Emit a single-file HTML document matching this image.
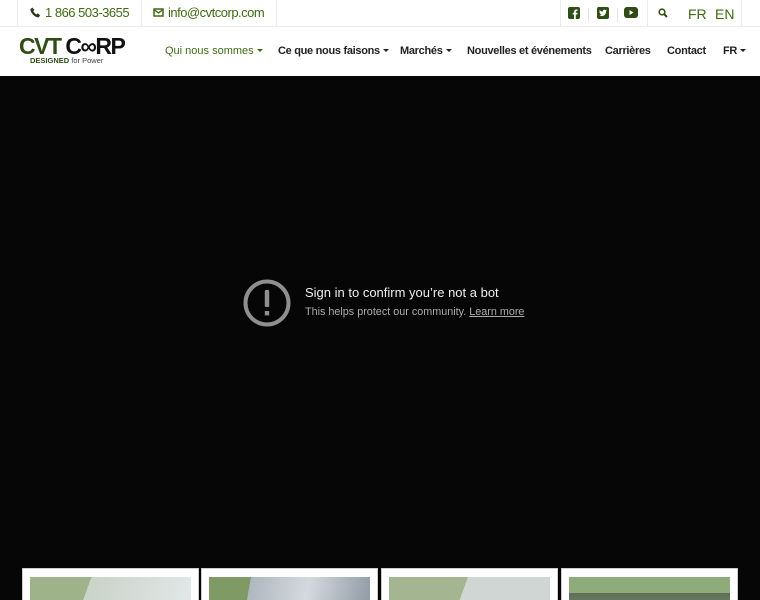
<!DOCTYPE html>
<html><head><meta charset="utf-8"><style>
*{margin:0;padding:0;box-sizing:border-box}
html,body{width:760px;height:600px;overflow:hidden}
body{background:#060606;font-family:"Liberation Sans",Arial,sans-serif;position:relative}
.top{position:absolute;left:0;top:0;width:760px;height:27px;background:#fff;border-bottom:1px solid #ececec}
.tc{position:absolute;top:0;height:26px;border-left:1px solid #ececec;color:#3e6a12;font-size:13px;line-height:26px;white-space:nowrap;letter-spacing:-0.5px}
.nav{position:absolute;left:0;top:27px;width:760px;height:49px;background:#fff}
.nav a{position:absolute;top:18px;font-size:11px;font-weight:bold;color:#222;text-decoration:none;letter-spacing:-0.3px;white-space:nowrap}
.car{display:inline-block;width:0;height:0;border-left:3px solid transparent;border-right:3px solid transparent;border-top:3px solid currentColor;margin-left:3px;vertical-align:2px}
.card{position:absolute;top:568px;width:177px;height:40px;background:#fff;border:1px solid #ccc}
.card div{position:absolute;left:7px;top:8px;right:7px;height:40px}
</style></head><body>
<div class="top">
 <div class="tc" style="left:17px;width:124px;padding-left:12px"><svg width="11" height="11" viewBox="0 0 10 10" style="vertical-align:-1px;margin-right:4px"><path d="M2 0.5l2 2-1 1.2c.6 1.3 1.8 2.5 3 3l1.2-1 2 2-1.4 1.8C4.5 9.5 .5 5.5.3 2z" fill="#2b3a1b"/></svg>1 866 503-3655</div>
 <div class="tc" style="left:141px;width:136px;padding-left:11px;border-right:1px solid #ececec"><svg width="11" height="9" viewBox="0 0 11 9" style="vertical-align:0;margin-right:4px"><rect x="1" y="1" width="9" height="7" fill="none" stroke="#3e6a12" stroke-width="1.5"/><path d="M1 1.5l4.5 3.5 4.5-3.5" fill="none" stroke="#3e6a12" stroke-width="1.3"/></svg>info@cvtcorp.com</div>
 <div class="tc" style="left:560px;width:87px"></div>
 <div class="tc" style="left:647px;width:95px;border-right:1px solid #ececec"></div>
 <svg style="position:absolute;left:568px;top:7px" width="12" height="12"><rect width="12" height="12" rx="2" fill="#2f4d15"/><path d="M7.8 12V7.5h1.5l.2-1.7H7.8V4.8c0-.5.2-.8.8-.8h.9V2.5H8.3C6.9 2.5 6.1 3.3 6.1 4.7v1.1H4.7v1.7h1.4V12z" fill="#fff"/></svg>
 <div style="position:absolute;left:588px;top:8px;width:1px;height:14px;background:#e5e5e5"></div>
 <svg style="position:absolute;left:597px;top:7px" width="12" height="12"><rect width="12" height="12" rx="2" fill="#2f4d15"/><path d="M2.5 8.5c3 1.5 6.5 0 6.5-4l1-1-1.1.2.7-.9-1 .3C7.5 2 5.5 3 5.9 4.6 4.4 4.6 3.3 3.9 2.6 3c-.5 1 0 1.8.5 2.1l-.7-.1c0 .8.6 1.3 1.2 1.5H3c.2.6.8 1 1.5 1-.6.5-1.3.8-2 1z" fill="#fff"/></svg>
 <div style="position:absolute;left:617px;top:8px;width:1px;height:14px;background:#e5e5e5"></div>
 <svg style="position:absolute;left:624px;top:7px" width="14" height="11"><rect width="14" height="11" rx="3" fill="#2f4d15"/><path d="M5.5 3v5l4-2.5z" fill="#fff"/></svg>
 <svg style="position:absolute;left:658px;top:8px" width="10" height="10"><circle cx="4" cy="4" r="2.8" fill="none" stroke="#2f4d15" stroke-width="1.6"/><path d="M6 6l3 3" stroke="#2f4d15" stroke-width="2"/></svg>
 <div style="position:absolute;left:688px;top:6px;font-size:14px;color:#3e6a12">FR</div>
 <div style="position:absolute;left:715px;top:6px;font-size:14px;color:#3e6a12">EN</div>
</div>
<div class="nav">
 <div style="position:absolute;left:19px;top:9px;font-size:23px;font-weight:900;letter-spacing:-1.5px;line-height:21px;white-space:nowrap"><span style="color:#2f4d15">CVT</span> <span style="color:#111">C∞RP</span></div>
 <div style="position:absolute;left:30px;top:30px;font-size:7.5px;line-height:8px;color:#2f4d15;white-space:nowrap"><b style="font-weight:900">DESIGNED</b> <span style="color:#444">for Power</span></div>
 <a style="left:165px;color:#3e6a12;font-weight:normal;letter-spacing:0">Qui nous sommes<span class="car"></span></a>
 <a style="left:278px">Ce que nous faisons<span class="car"></span></a>
 <a style="left:400px">Marchés<span class="car"></span></a>
 <a style="left:467px">Nouvelles et événements</a>
 <a style="left:605px">Carrières</a>
 <a style="left:667px">Contact</a>
 <a style="left:723px">FR<span class="car"></span></a>
</div>
<svg style="position:absolute;left:243px;top:279px" width="48" height="48"><circle cx="24" cy="24" r="21.5" fill="none" stroke="#8f8f8f" stroke-width="4"/><rect x="21.8" y="11" width="4.4" height="17" rx="1" fill="#8f8f8f"/><rect x="21.8" y="32" width="4.4" height="4.4" fill="#8f8f8f"/></svg>
<div style="position:absolute;left:305px;top:285px;font-size:13px;color:#eee;white-space:nowrap">Sign in to confirm you’re not a bot</div>
<div style="position:absolute;left:305px;top:306px;font-size:10.8px;color:#aaa;white-space:nowrap">This helps protect our community. <span style="text-decoration:underline">Learn more</span></div>
<div class="card" style="left:22px"><div style="background:linear-gradient(110deg,#9fb38a 0 35%,#c9d3c8 35%,#e4e8ea)"></div></div>
<div class="card" style="left:201px"><div style="background:linear-gradient(100deg,#7f9a64 0 25%,#aeb8bf 25%,#d4d9dd 60%,#8e99a4)"></div></div>
<div class="card" style="left:381px"><div style="background:linear-gradient(110deg,#a4b691 0 45%,#cfd6d3 45%)"></div></div>
<div class="card" style="left:561px"><div style="background:linear-gradient(180deg,#8eab7a 0 40%,#5e6e58 40%,#7d8f7a)"></div></div>
</body></html>
